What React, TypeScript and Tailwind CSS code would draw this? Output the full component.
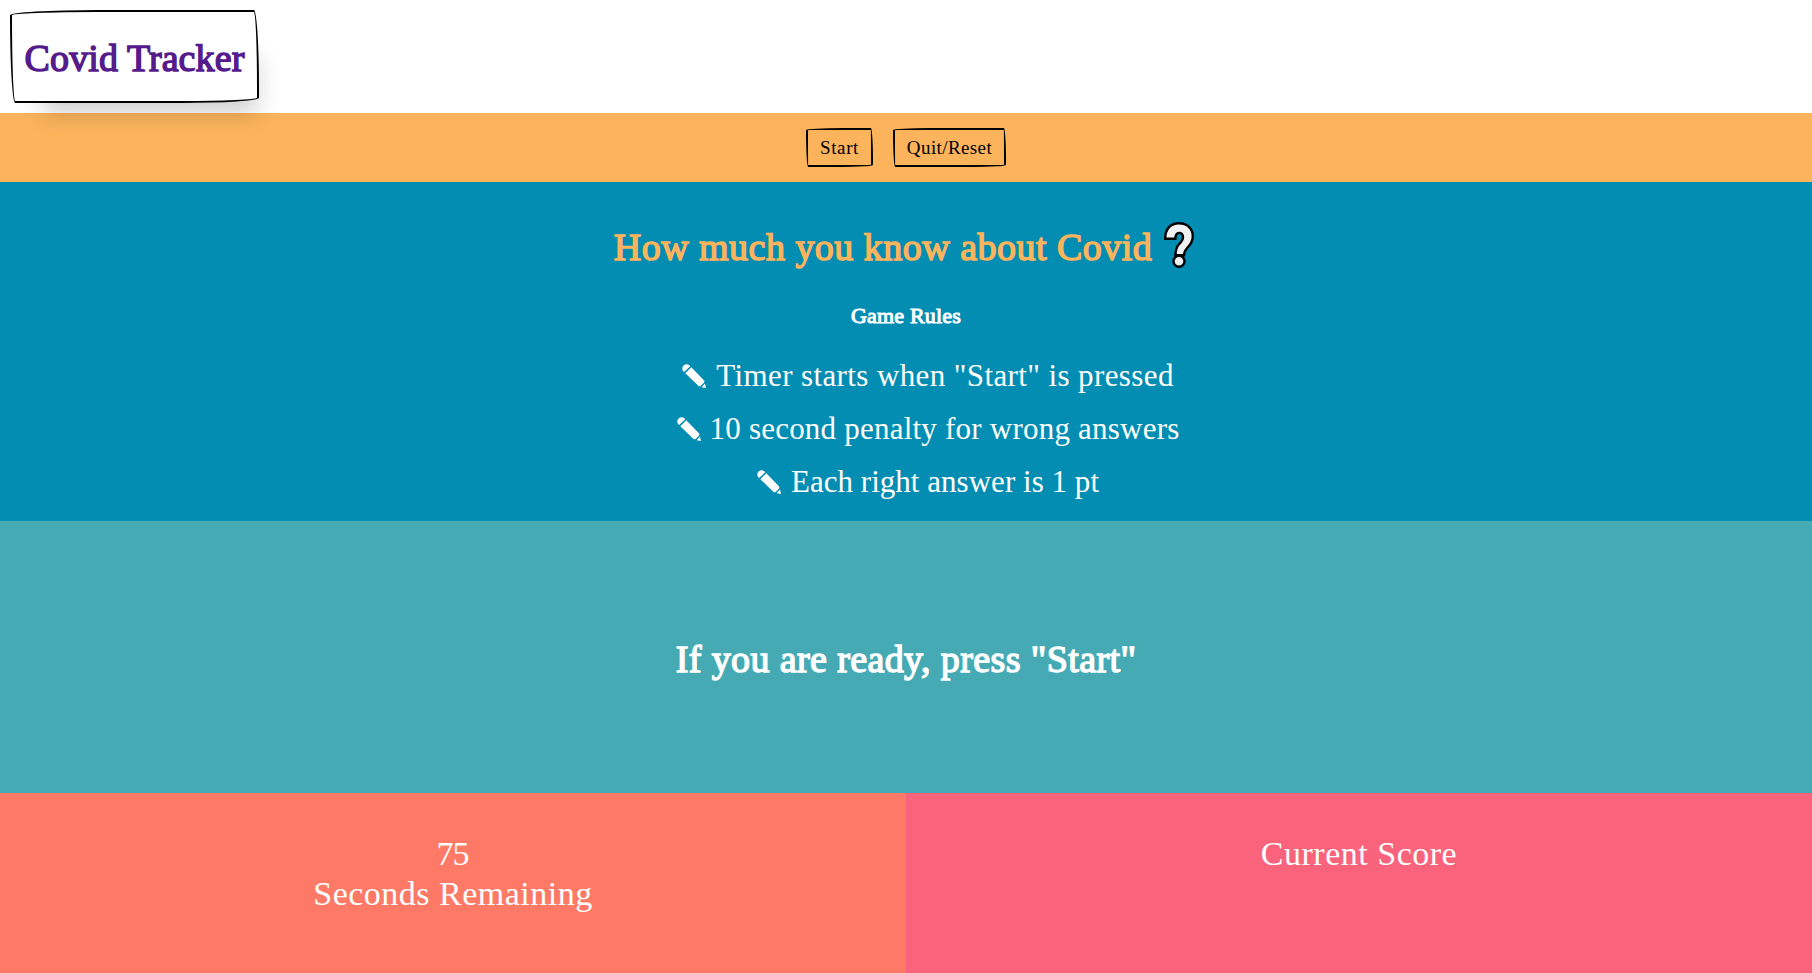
const sketchBorder =
  "border-2 border-black [border-radius:255px_15px_225px_15px/15px_225px_15px_255px]";

function Pencil() {
  return (
    <svg viewBox="0 0 24 24" className="relative -top-[1px] h-6 w-6 shrink-0" fill="#fff" aria-hidden="true">
      <path d="M7.600 1.600C5.800-.2 3.300-.1 1.600 1.600-.1 3.300-.1 5.600 1.300 7.300L2.100 8.100 8.300 2.200Z" />
      <path d="M9.300 3.200 3.300 9.200 16.300 21.700Q17.600 22.800 18.900 21.700L21.900 18.700Q22.900 17.500 21.900 16.200Z" />
      <path d="M23 19.600 19.600 23.200 24 23.900Z" />
    </svg>
  );
}

function QuestionMark() {
  return (
    <svg viewBox="0 0 30 46" className="h-[46px] w-[30px]" fill="none" aria-hidden="true">
      <path
        d="M1.200 16.800C1 7 6.500 1.200 15 1.200c8 0 13.800 5.300 13.800 13.100 0 5.400-2.300 8.300-5.200 11.200-2.400 2.400-3.500 4.300-3.500 7.700h-8.600c0-6 .9-8.300 3.700-11.200 2.300-2.400 3.800-3.900 3.800-6.800 0-2.800-1.500-4.300-3.800-4.300-2.500 0-3.900 1.800-3.800 5.900Z"
        fill="#f2f2f2"
        stroke="#000"
        strokeWidth="2.400"
      />
      <circle cx="15" cy="39.200" r="5.500" fill="#f2f2f2" stroke="#000" strokeWidth="2.400" />
    </svg>
  );
}

const rules = [
  { text: 'Timer starts when "Start" is pressed', gap: "gap-[10px]", spacing: "tracking-[0.39px]" },
  { text: "10 second penalty for wrong answers", gap: "gap-[9px]", spacing: "tracking-[0.22px]" },
  { text: "Each right answer is 1 pt", gap: "gap-[10px]", spacing: "tracking-[0.03px]" },
];

export default function App() {
  return (
    <div className="flex h-[973px] w-full flex-col overflow-hidden font-['Liberation_Serif',serif] text-white">
      <header className="relative z-10 flex h-[113px] shrink-0 items-start pl-[10px] pt-[10px]">
        <a
          className={`${sketchBorder} flex h-[93px] w-[249px] items-center justify-center bg-white pt-[2px] text-[38px] leading-none tracking-[0.1px] text-[#551a8b] shadow-[15px_28px_25px_-18px_rgba(0,0,0,0.2)] [-webkit-text-stroke:1.400px_#551a8b]`}
        >
          Covid Tracker
        </a>
      </header>

      <nav className="flex h-[69px] shrink-0 items-start justify-center gap-5 bg-[#fbb45c] pt-[15px] text-[19px] leading-none text-black">
        <button className={`${sketchBorder} h-[39px] w-[67px] tracking-[0.6px] shadow-[15px_28px_25px_-18px_rgba(0,0,0,0.03)]`}>
          Start
        </button>
        <button className={`${sketchBorder} h-[39px] w-[113px] tracking-[0.4px] shadow-[15px_28px_25px_-18px_rgba(0,0,0,0.03)]`}>
          Quit/Reset
        </button>
      </nav>

      <section className="relative flex h-[339px] shrink-0 flex-col items-center bg-[#038db2] pt-[39px]">
        <h1 className="flex h-[48px] items-center gap-[12px] pr-[4px] text-[38px] leading-[48px] tracking-[0.48px] text-[#fbb45c] [-webkit-text-stroke:1.400px_#fbb45c]">
          <span className="pt-[3px]">How much you know about Covid</span>
          <QuestionMark />
        </h1>
        <h2 className="mt-[35px] text-[22px] leading-6 tracking-[0.2px] [-webkit-text-stroke:1px_#fff]">
          Game Rules
        </h2>
        <ul className="mt-[22px] flex flex-col items-center pl-[44px] text-[31px]">
          {rules.map((rule) => (
            <li key={rule.text} className={`flex h-[53px] items-center whitespace-nowrap ${rule.gap} ${rule.spacing}`}>
              <Pencil />
              <span>{rule.text}</span>
            </li>
          ))}
        </ul>
      </section>

      <section className="flex h-[272px] shrink-0 items-center justify-center bg-[#45aab4]">
        <h2 className="mt-1 text-[38px] leading-none tracking-[0.39px] [-webkit-text-stroke:1.400px_#fff]">
          If you are ready, press "Start"
        </h2>
      </section>

      <footer className="grid flex-1 grid-cols-2 text-center text-[34px] leading-10 tracking-[0.5px]">
        <div className="bg-[#fe7a66] pt-[41px]">
          <div className="pr-[1px] tracking-[-1px]">75</div>
          <div>Seconds Remaining</div>
        </div>
        <div className="bg-[#f9637c] pt-[41px]">Current Score</div>
      </footer>
    </div>
  );
}
